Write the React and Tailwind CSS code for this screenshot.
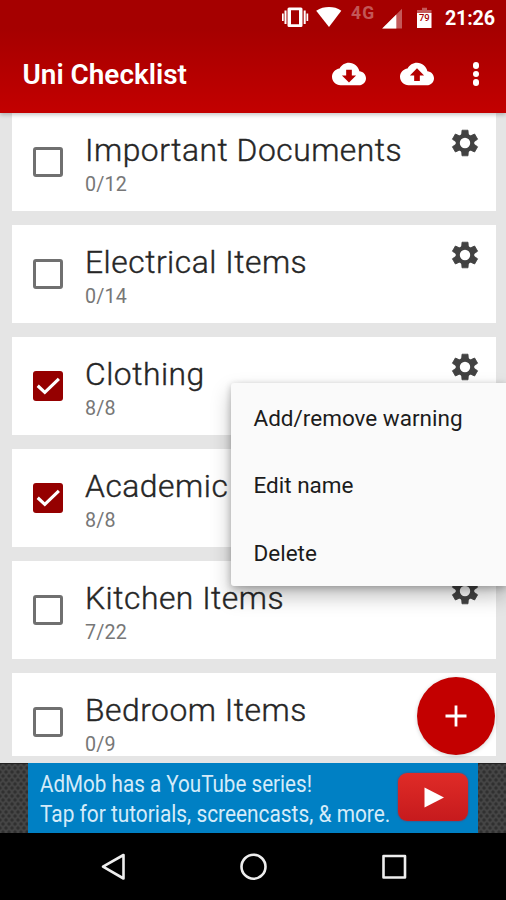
import React from "react";

const CLOUD =
  "M19.35 10.04C18.67 6.59 15.64 4 12 4 9.11 4 6.6 5.64 5.35 8.04 2.34 8.36 0 10.91 0 14c0 3.31 2.69 6 6 6h13c2.76 0 5-2.24 5-5 0-2.64-2.05-4.78-4.65-4.96z";

function CloudIcon({ arrow }) {
  return (
    <svg viewBox="0 0 24 24" className="h-[34px] w-[34px]" fill="white" fillRule="evenodd">
      <path d={CLOUD + arrow} />
    </svg>
  );
}

function Gear() {
  return (
    <svg viewBox="-14 -14 28 28" className="h-7 w-7 shrink-0">
      <circle r="7.3" fill="none" stroke="#424242" strokeWidth="4.2" />
      {[0, 60, 120, 180, 240, 300].map((a) => (
        <path
          key={a}
          d="M-3.4 -8 L-3 -12.8 H3 L3.4 -8z"
          transform={`rotate(${a})`}
          fill="#424242"
          stroke="#424242"
          strokeWidth="0.8"
          strokeLinejoin="round"
        />
      ))}
    </svg>
  );
}

function CheckBox({ checked }) {
  if (!checked) {
    return <div className="mt-[33.500px] h-[30.500px] w-[30.500px] shrink-0 rounded-[3px] border-[3px] border-[#707070]" />;
  }
  return (
    <div className="mt-[33.500px] h-[30.500px] w-[30.500px] shrink-0 rounded-[3px] bg-[#950000]">
      <svg viewBox="0 0 31 31" className="h-full w-full">
        <path d="M4.8 15 L12 21.7 L26.3 8" fill="none" stroke="white" strokeWidth="3.200" />
      </svg>
    </div>
  );
}

function Card({ name, count, checked }) {
  return (
    <div className="flex h-[98px] shrink-0 bg-white pl-[21.300px] pr-[17px]">
      <CheckBox checked={checked} />
      <div className="ml-[21.500px] flex-1 pt-[19px]">
        <div className="whitespace-nowrap text-[31.800px] font-light leading-9 tracking-[0.520px] text-[#262626] [-webkit-text-stroke:0.400px_#262626]">{name}</div>
        <div className="mt-[5px] text-[19.700px] leading-[23px] tracking-[0.200px] text-[#777777]">{count}</div>
      </div>
      <div className="pt-4">
        <Gear />
      </div>
    </div>
  );
}

const LISTS = [
  { name: "Important Documents", count: "0/12" },
  { name: "Electrical Items", count: "0/14" },
  { name: "Clothing", count: "8/8", checked: true },
  { name: "Academic", count: "8/8", checked: true },
  { name: "Kitchen Items", count: "7/22" },
  { name: "Bedroom Items", count: "0/9" },
];

function StatusBar() {
  return (
    <div className="flex h-9 items-start">
      <svg viewBox="0 0 160 36" className="ml-[276px] h-9 w-40 shrink-0">
        <g fill="white">
          <path fillRule="evenodd" d="M13 7.5h12a1.5 1.5 0 0 1 1.500 1.500v16.500a1.500 1.500 0 0 1-1.500 1.500H13a1.500 1.500 0 0 1-1.500-1.500V9A1.500 1.500 0 0 1 13 7.500zM15 10.300v14h8v-14z" />
          <path d="M8.500 10.500h2v13.500h-2zM6 13.500h1.700v7.500H6zM27.700 10.500h2v13.500h-2zM30.500 13.500h1.700v7.500h-1.700z" />
          <path d="M40.200 10.800C44.500 7.700 48.500 7 53 7s8.500.7 12.300 3.800L53 27z" />
        </g>
        <path d="M126 8.800V28.500H106.200z" fill="white" fillOpacity=".35" />
        <path d="M120.300 14.500V28.500H106.200z" fill="white" />
        <path d="M146 7.700h5v2.400h4.500v3.400h-14.500v-3.400h5z" fill="white" fillOpacity=".35" />
        <path d="M141 13h14.500v15H141z" fill="white" />
        <text x="148.300" y="21" textAnchor="middle" fontFamily="Roboto" fontWeight="500" fontSize="9.500" fill="#a80000">79</text>
        <text x="75" y="19" fontFamily="Roboto" fontWeight="700" fontSize="17.500" letterSpacing="1.200" fill="white" fillOpacity=".35">4G</text>
      </svg>
      <div className="ml-[9px] pt-[7px] text-[19.700px] font-bold leading-[23px] tracking-[-0.200px] text-white">21:26</div>
    </div>
  );
}

function Header() {
  return (
    <header className="relative z-10 h-[113px] shrink-0 bg-linear-to-b from-[#a50000] from-25% to-[#c30000] shadow-[0_2px_4px_rgba(0,0,0,0.22)]">
      <StatusBar />
      <div className="flex h-[76px] items-center pl-[22.500px] pr-[27px]">
        <h1 className="flex-1 pt-[2px] text-[27.900px] font-semibold tracking-[0px] text-white">Uni Checklist</h1>
        <CloudIcon arrow="M17 13l-5 5-5-5h3V9h4v4h3z" />
        <div className="w-[33.500px]" />
        <CloudIcon arrow="M14 13v4h-4v-4H7l5-5 5 5h-3z" />
        <div className="ml-[39px] flex flex-col gap-[2.300px]">
          <span className="h-[6.200px] w-[6.200px] rounded-full bg-white" />
          <span className="h-[6.200px] w-[6.200px] rounded-full bg-white" />
          <span className="h-[6.200px] w-[6.200px] rounded-full bg-white" />
        </div>
      </div>
    </header>
  );
}

function Menu() {
  return (
    <div className="absolute left-[231px] right-0 top-[383px] z-20 flex flex-col rounded-l-[3px] bg-[#fafafa] shadow-[0_10px_20px_rgba(0,0,0,0.26),0_2px_7px_rgba(0,0,0,0.24)]">
      {["Add/remove warning", "Edit name", "Delete"].map((label) => (
        <div key={label} className="flex h-[67.500px] items-center whitespace-nowrap pl-[22.500px] pt-[3.500px] text-[22.500px] text-[#1c1c1c]">
          {label}
        </div>
      ))}
    </div>
  );
}

function AdSide() {
  return (
    <div className="flex-1 border-t border-[#222] bg-[#454545] bg-[radial-gradient(circle,#303030_1px,transparent_2.200px),radial-gradient(circle,#303030_1px,transparent_2.200px)] bg-[length:6px_8px] bg-[position:0_0,3px_4px]" />
  );
}

function Ad() {
  return (
    <div className="flex h-[70px] shrink-0">
      <AdSide />
      <div className="flex h-full w-[450px] bg-[#0080c4] pl-3">
        <div className="w-[357.500px] pt-[7px] text-[23px] leading-[29.500px] text-[#d4ebf9]">
          <div className="origin-left scale-x-[0.897] whitespace-nowrap">AdMob has a YouTube series!</div>
          <div className="origin-left scale-x-[0.907] whitespace-nowrap">Tap for tutorials, screencasts, &amp; more.</div>
        </div>
        <div className="mt-2.5 flex h-12 w-[70px] items-center justify-center rounded-[9px] bg-linear-to-b from-[#e02b27] to-[#c61a1d] shadow-[0_0_2px_#7a3050]">
          <svg viewBox="0 0 20 21" className="ml-[3px] h-[21px] w-5">
            <path d="M0.500 0.500L20 10.500 0.500 20.500z" fill="white" />
          </svg>
        </div>
      </div>
      <AdSide />
    </div>
  );
}

function NavBar() {
  return (
    <nav className="flex h-[67px] shrink-0 items-center bg-black">
      <svg viewBox="0 0 506 67" className="h-[67px] w-full" fill="none" stroke="#eeeeee" strokeWidth="2.600" strokeLinejoin="round">
        <path d="M123.500 22v23.500L103 33.700z" />
        <circle cx="253.500" cy="33.700" r="12" />
        <rect x="383.500" y="23" width="21.500" height="21.500" />
      </svg>
    </nav>
  );
}

export default function App() {
  return (
    <div className="relative flex h-[900px] w-[506px] flex-col overflow-hidden bg-[#e5e5e5] font-['Roboto',sans-serif]">
      <Header />
      <main className="mb-[7px] flex h-[643px] shrink-0 flex-col gap-3.5 overflow-hidden pl-[11.700px] pr-[10px]">
        {LISTS.map((item) => (
          <Card key={item.name} {...item} />
        ))}
      </main>
      <Ad />
      <NavBar />
      <Menu />
      <button className="absolute left-[416.500px] top-[676.500px] z-10 flex h-[78.500px] w-[78.500px] items-center justify-center rounded-full bg-[#c30000] shadow-[0_1px_4px_rgba(0,0,0,0.18)]">
        <svg viewBox="0 0 22 22" className="h-[22px] w-[22px]">
          <path d="M11 0.500v21M0.500 11h21" stroke="white" strokeWidth="2.800" />
        </svg>
      </button>
    </div>
  );
}
